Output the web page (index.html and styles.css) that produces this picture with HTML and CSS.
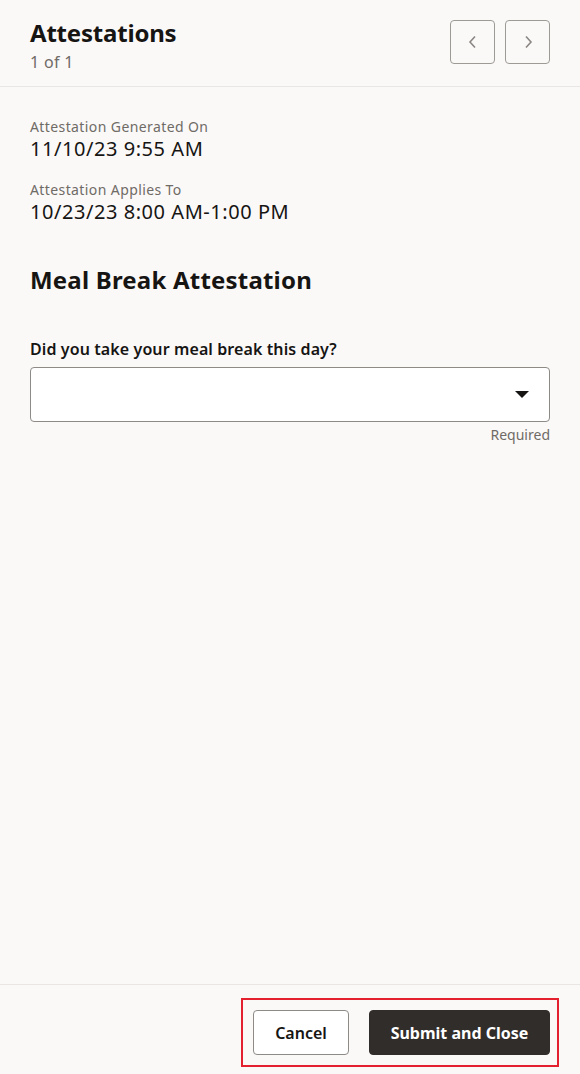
FILE: index.html
```html
<!DOCTYPE html>
<html lang="en">
<head>
<meta charset="utf-8">
<title>Attestations</title>
<link rel="stylesheet" href="styles.css">
</head>
<body>
<div class="page">
  <header class="header">
    <div class="titles">
      <h1 class="title">Attestations</h1>
      <div class="count">1 of 1</div>
    </div>
    <div class="nav">
      <button class="nav-btn" aria-label="Previous">
        <svg width="12" height="14" viewBox="0 0 12 14"><path d="M8 1.5 L3 7 L8 12.5" fill="none" stroke="#8a8683" stroke-width="1.6"/></svg>
      </button>
      <button class="nav-btn" aria-label="Next">
        <svg width="12" height="14" viewBox="0 0 12 14"><path d="M4 1.5 L9 7 L4 12.5" fill="none" stroke="#8a8683" stroke-width="1.6"/></svg>
      </button>
    </div>
  </header>
  <main class="content">
    <div class="field">
      <div class="label">Attestation Generated On</div>
      <div class="value">11/10/23 9:55 AM</div>
    </div>
    <div class="field">
      <div class="label">Attestation Applies To</div>
      <div class="value">10/23/23 8:00 AM-1:00 PM</div>
    </div>
    <h2 class="section">Meal Break Attestation</h2>
    <div class="question">Did you take your meal break this day?</div>
    <div class="select">
      <svg class="caret" width="14" height="7" viewBox="0 0 14 7"><path d="M0 0 L14 0 L7 7 Z" fill="#161513"/></svg>
    </div>
    <div class="required">Required</div>
  </main>
  <footer class="footer">
    <div class="actions">
      <button class="btn btn-outline">Cancel</button>
      <button class="btn btn-solid">Submit and Close</button>
      <div class="highlight"></div>
    </div>
  </footer>
</div>
</body>
</html>
```
FILE: styles.css
```css
* { box-sizing: border-box; }
html, body { margin: 0; padding: 0; }
body {
  background: #fbf9f8;
  font-family: "Noto Sans", "Open Sans", sans-serif;
  color: #161513;
}
.page {
  display: flex;
  flex-direction: column;
  height: 1074px;
}
.header {
  display: flex;
  justify-content: space-between;
  align-items: flex-start;
  padding: 20px 30px 0 30px;
  height: 87px;
  border-bottom: 1px solid #e9e6e3;
}
.titles { margin-top: -1px; }
.title {
  margin: 0;
  font-size: 24px;
  font-weight: 700;
  line-height: 28px;
  letter-spacing: -0.2px;
}
.count {
  font-size: 16px;
  color: #6f6b66;
  line-height: 22px;
  margin-top: 4px;
  letter-spacing: 0.3px;
}
.nav { display: flex; gap: 10px; }
.nav-btn {
  width: 45px;
  height: 44px;
  border: 1px solid #9e9a96;
  border-radius: 4px;
  background: transparent;
  display: flex;
  align-items: center;
  justify-content: center;
  padding: 0;
}
.content {
  flex: 1;
  padding: 31px 30px 0 30px;
}
.field { margin-bottom: 19px; }
.label {
  font-size: 14px;
  color: #6f6b66;
  line-height: 18px;
  letter-spacing: 0.4px;
}
.value {
  font-size: 20px;
  line-height: 26px;
  letter-spacing: 0.55px;
}
.section {
  margin: 40px 0 0 0;
  font-size: 24px;
  font-weight: 700;
  line-height: 30px;
  letter-spacing: 0.2px;
}
.question {
  margin-top: 43px;
  font-size: 16px;
  font-weight: 600;
  line-height: 22px;
  letter-spacing: 0.1px;
}
.select {
  margin-top: 7px;
  height: 55px;
  background: #ffffff;
  border: 1px solid #8e8a86;
  border-radius: 4px;
  display: flex;
  align-items: center;
  justify-content: flex-end;
  padding-right: 20px;
}
.required {
  text-align: right;
  font-size: 14px;
  color: #6f6b66;
  line-height: 18px;
  margin-top: 4px;
}
.footer {
  height: 90px;
  border-top: 1px solid #e9e6e3;
  display: flex;
  justify-content: flex-end;
  padding: 25px 30px 0 30px;
}
.actions {
  position: relative;
  display: flex;
  gap: 20px;
  height: 45px;
}
.btn {
  height: 45px;
  border-radius: 4px;
  font-family: "Noto Sans", "Open Sans", sans-serif;
  font-size: 16px;
  font-weight: 700;
  padding: 0 20px;
}
.btn-outline {
  width: 96px;
  background: #ffffff;
  border: 1px solid #8e8a86;
  color: #161513;
  font-weight: 600;
}
.btn-solid {
  width: 181px;
  background: #312d2a;
  border: 1px solid #312d2a;
  color: #ffffff;
}
.highlight {
  position: absolute;
  left: -12px;
  right: -9px;
  top: -12px;
  bottom: -12px;
  border: 2px solid #e4202f;
  pointer-events: none;
}
```
